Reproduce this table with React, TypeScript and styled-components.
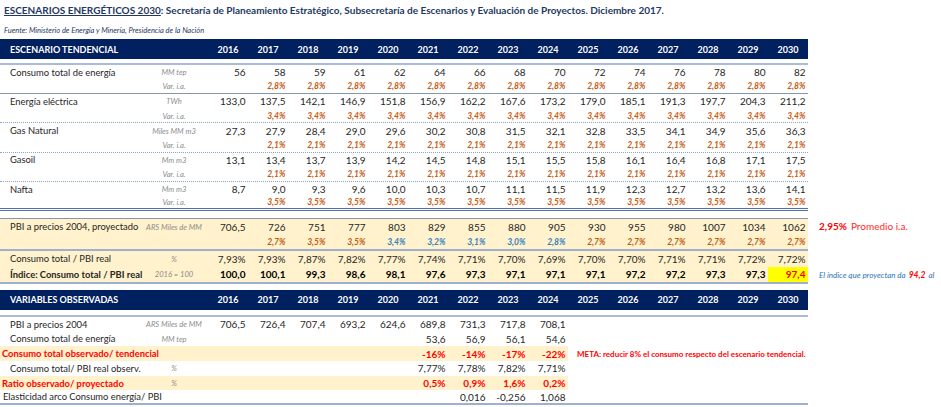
import React from 'react'
import styled, { createGlobalStyle, css } from 'styled-components'

const GlobalStyle = createGlobalStyle`
    html, body {
        margin: 0;
        padding: 0;
        background: #ffffff;
        overflow: hidden;
    }
    body {
        font-family: Lato, "Open Sans", sans-serif;
        color: #262626;
    }
`

type Edge = 'none' | 'solid' | 'dotted' | 'double' | 'thick'
type Tone = 'plain' | 'var' | 'blue' | 'red' | 'bold' | 'mark'

const YEARS = ['2016', '2017', '2018', '2019', '2020', '2021', '2022', '2023', '2024', '2025', '2026', '2027', '2028', '2029', '2030']

const edgeCss = (edge?: Edge) => {
    switch (edge) {
        case 'solid': return '1px solid #8497b0'
        case 'dotted': return '1px dotted #8ea3c8'
        case 'double': return '3px double #4f6ea8'
        case 'thick': return '2px solid #9db0d0'
        default: return 'none'
    }
}

const Page = styled.div`
    width: 941px;
    height: 407px;
    overflow: hidden;
`

const Title = styled.div`
    height: 20px;
    line-height: 20px;
    padding-left: 4px;
    font-size: 10px;
    font-weight: 700;
    color: #1f3864;
    white-space: nowrap;

    u {
        text-decoration-color: #1f3864;
    }
`

const Source = styled.div`
    margin-top: 4px;
    margin-bottom: 1px;
    height: 14px;
    line-height: 14px;
    padding-left: 4px;
    font-size: 7.5px;
    font-style: italic;
    color: #1f3864;
`

const Line = styled.div<{ $gap?: number }>`
    display: flex;
    align-items: stretch;
    margin-top: ${p => p.$gap || 0}px;
`

const Grid = styled.div<{ $h: number; $band?: number; $bottom?: Edge; $top?: Edge; $head?: boolean }>`
    box-sizing: border-box;
    flex: none;
    width: 808px;
    height: ${p => p.$h}px;
    display: grid;
    grid-template-columns: 140px 68px repeat(15, 40px);
    align-items: center;
    border-bottom: ${p => edgeCss(p.$bottom)};
    border-top: ${p => edgeCss(p.$top)};
    background: ${p => p.$band ? `linear-gradient(90deg, #fff2cc ${p.$band}px, transparent ${p.$band}px)` : 'transparent'};
    ${p => p.$head && css`
        background: #002060;
        color: #ffffff;
        font-weight: 700;
        font-size: 9px;
    `}
`

const Rule = styled.div<{ $gap: number }>`
    width: 808px;
    margin-top: ${p => p.$gap}px;
    border-top: 2px solid #a9bbd9;
`

const HeadLabel = styled.div`
    grid-column: span 2;
    padding-left: 10px;
    white-space: nowrap;
`

const Year = styled.div`
    text-align: center;
`

const Label = styled.div<{ $indent?: number; $bold?: boolean; $red?: boolean }>`
    padding-left: ${p => p.$indent ?? 10}px;
    font-size: 9.4px;
    white-space: nowrap;
    overflow: visible;
    font-weight: ${p => p.$bold ? 700 : 400};
    color: ${p => p.$red ? '#ff0000' : '#262626'};
`

const Unit = styled.div`
    text-align: center;
    font-size: 7.6px;
    font-style: italic;
    color: #8c8c8c;
    white-space: nowrap;
`

const Num = styled.div<{ $tone?: Tone }>`
    box-sizing: border-box;
    height: 100%;
    display: flex;
    align-items: center;
    justify-content: flex-end;
    padding-right: 2.5px;
    font-size: 10px;
    white-space: nowrap;
    color: #262626;
    ${p => p.$tone === 'var' && css`
        font-size: 8.5px;
        font-style: italic;
        font-weight: 700;
        color: #c65911;
    `}
    ${p => p.$tone === 'blue' && css`
        font-size: 8.5px;
        font-style: italic;
        font-weight: 700;
        color: #2f7fc1;
    `}
    ${p => p.$tone === 'red' && css`
        font-weight: 700;
        color: #ff0000;
    `}
    ${p => p.$tone === 'bold' && css`
        font-weight: 700;
        color: #000000;
    `}
    ${p => p.$tone === 'mark' && css`
        font-weight: 700;
        color: #ff0000;
        background: #ffff00;
    `}
`

const Meta = styled.div`
    padding-left: 9px;
    font-size: 8px;
    font-weight: 700;
    color: #ff0000;
    white-space: nowrap;
`

const Note = styled.div`
    display: flex;
    align-items: center;
    padding-left: 11px;
    white-space: nowrap;
`

const NoteAvg = styled.span`
    font-size: 10px;
    color: #ff2a2a;

    b {
        color: #ff0000;
        margin-right: 4px;
    }
`

const NoteIndex = styled.span`
    font-size: 8px;
    font-style: italic;
    color: #2e75b6;

    b {
        color: #ff0000;
        font-size: 8.5px;
        margin: 0 3px;
    }
`

interface DataRowProps {
    label?: string
    unit?: string
    values: (string | [string, Tone])[]
    tone?: Tone
    h: number
    band?: number
    bottom?: Edge
    top?: Edge
    indent?: number
    bold?: boolean
    red?: boolean
    gap?: number
    note?: React.ReactNode
    meta?: string
}

const DataRow = (props: DataRowProps) => {
    const cells = YEARS.map((y, i) => {
        const v = props.values[i]
        if (v === undefined) return null
        if (Array.isArray(v)) return <Num key={y} style={{ gridColumn: i + 3 }} $tone={v[1]}>{v[0]}</Num>
        return <Num key={y} style={{ gridColumn: i + 3 }} $tone={props.tone}>{v}</Num>
    })
    return (
        <Line $gap={props.gap}>
            <Grid $h={props.h} $band={props.band} $bottom={props.bottom} $top={props.top}>
                <Label $indent={props.indent} $bold={props.bold} $red={props.red}>{props.label}</Label>
                <Unit style={{ gridColumn: 2 }}>{props.unit}</Unit>
                {cells}
                {props.meta && <Meta style={{ gridColumn: '12 / span 6', gridRow: 1 }}>{props.meta}</Meta>}
            </Grid>
            {props.note && <Note>{props.note}</Note>}
        </Line>
    )
}

const HeaderBar = ({ title, gap }: { title: string; gap?: number }) => (
    <Line $gap={gap}>
        <Grid $h={20} $head>
            <HeadLabel>{title}</HeadLabel>
            {YEARS.map(y => <Year key={y}>{y}</Year>)}
        </Grid>
    </Line>
)

const blank = (n: number) => Array.from({ length: n }, () => '')
const repeatVar = (v: string) => ['', ...Array.from({ length: 14 }, () => v)]

interface Group {
    label: string
    unit: string
    values: string[]
    rate: string
    edge: Edge
}

const GROUPS: Group[] = [
    { label: 'Consumo total de energía', unit: 'MM tep', rate: '2,8%', edge: 'solid', values: ['56', '58', '59', '61', '62', '64', '66', '68', '70', '72', '74', '76', '78', '80', '82'] },
    { label: 'Energía eléctrica', unit: 'TWh', rate: '3,4%', edge: 'dotted', values: ['133,0', '137,5', '142,1', '146,9', '151,8', '156,9', '162,2', '167,6', '173,2', '179,0', '185,1', '191,3', '197,7', '204,3', '211,2'] },
    { label: 'Gas Natural', unit: 'Miles MM m3', rate: '2,1%', edge: 'dotted', values: ['27,3', '27,9', '28,4', '29,0', '29,6', '30,2', '30,8', '31,5', '32,1', '32,8', '33,5', '34,1', '34,9', '35,6', '36,3'] },
    { label: 'Gasoil', unit: 'Mm m3', rate: '2,1%', edge: 'dotted', values: ['13,1', '13,4', '13,7', '13,9', '14,2', '14,5', '14,8', '15,1', '15,5', '15,8', '16,1', '16,4', '16,8', '17,1', '17,5'] },
    { label: 'Nafta', unit: 'Mm m3', rate: '3,5%', edge: 'double', values: ['8,7', '9,0', '9,3', '9,6', '10,0', '10,3', '10,7', '11,1', '11,5', '11,9', '12,3', '12,7', '13,2', '13,6', '14,1'] },
]

const PBI_RATE: (string | [string, Tone])[] = [
    '', '2,7%', '3,5%', '3,5%', ['3,4%', 'blue'], ['3,2%', 'blue'], ['3,1%', 'blue'], ['3,0%', 'blue'], ['2,8%', 'blue'],
    '2,7%', '2,7%', '2,7%', '2,7%', '2,7%', '2,7%',
]

const INDEX: (string | [string, Tone])[] = [
    '100,0', '100,1', '99,3', '98,6', '98,1', '97,6', '97,3', '97,1', '97,1', '97,1', '97,2', '97,2', '97,3', '97,3', ['97,4', 'mark'],
]

const App = () => {
    return (
        <Page>
            <GlobalStyle />
            <Title>
                <u>ESCENARIOS ENERGÉTICOS 2030</u>: Secretaría de Planeamiento Estratégico, Subsecretaría de Escenarios y Evaluación de Proyectos. Diciembre 2017.
            </Title>
            <Source>Fuente: Ministerio de Energía y Minería, Presidencia de la Nación</Source>

            <HeaderBar title="ESCENARIO TENDENCIAL" />
            <Rule $gap={4} />
            {GROUPS.map(g => (
                <React.Fragment key={g.label}>
                    <DataRow h={14.6} label={g.label} unit={g.unit} values={g.values} />
                    <DataRow h={14.6} unit="Var. i.a." values={repeatVar(g.rate)} tone="var" bottom={g.edge} />
                </React.Fragment>
            ))}

            <DataRow gap={7} h={17} band={808} top="solid" label="PBI a precios 2004, proyectado" unit="ARS Miles de MM"
                values={['706,5', '726', '751', '777', '803', '829', '855', '880', '905', '930', '955', '980', '1007', '1034', '1062']}
                note={<NoteAvg><b>2,95%</b>Promedio i.a.</NoteAvg>} />
            <DataRow h={16} band={808} bottom="thick" values={PBI_RATE} tone="var" />
            <DataRow h={16} band={808} label="Consumo total / PBI real" unit="%"
                values={['7,93%', '7,93%', '7,87%', '7,82%', '7,77%', '7,74%', '7,71%', '7,70%', '7,69%', '7,70%', '7,70%', '7,71%', '7,71%', '7,72%', '7,72%']} />
            <DataRow h={17} band={808} bottom="thick" bold label="Índice: Consumo total / PBI real" unit="2016 = 100" values={INDEX} tone="bold"
                note={<NoteIndex>El índice que proyectan da<b>94,2</b>al</NoteIndex>} />

            <HeaderBar title="VARIABLES OBSERVADAS" gap={6} />
            <Rule $gap={5} />
            <DataRow h={14.7} label="PBI a precios 2004" unit="ARS Miles de MM"
                values={['706,5', '726,4', '707,4', '693,2', '624,6', '689,8', '731,3', '717,8', '708,1']} />
            <DataRow h={14.7} label="Consumo total de energía" unit="MM tep"
                values={[...blank(5), '53,6', '56,9', '56,1', '54,6']} />
            <DataRow h={14.7} band={568} label="Consumo total observado/ tendencial" indent={2} bold red tone="red"
                values={[...blank(5), '-16%', '-14%', '-17%', '-22%']}
                meta="META: reducir 8% el consumo respecto del escenario tendencial." />
            <DataRow h={14.7} label="Consumo total/ PBI real observ." unit="%"
                values={[...blank(5), '7,77%', '7,78%', '7,82%', '7,71%']} />
            <DataRow h={14.7} band={568} label="Ratio observado/ proyectado" unit="%" indent={2} bold red tone="red"
                values={[...blank(5), '0,5%', '0,9%', '1,6%', '0,2%']} />
            <DataRow h={14.7} bottom="thick" label="Elasticidad arco Consumo energía/ PBI" indent={3}
                values={[...blank(6), '0,016', '-0,256', '1,068']} />
        </Page>
    )
}

export default App
